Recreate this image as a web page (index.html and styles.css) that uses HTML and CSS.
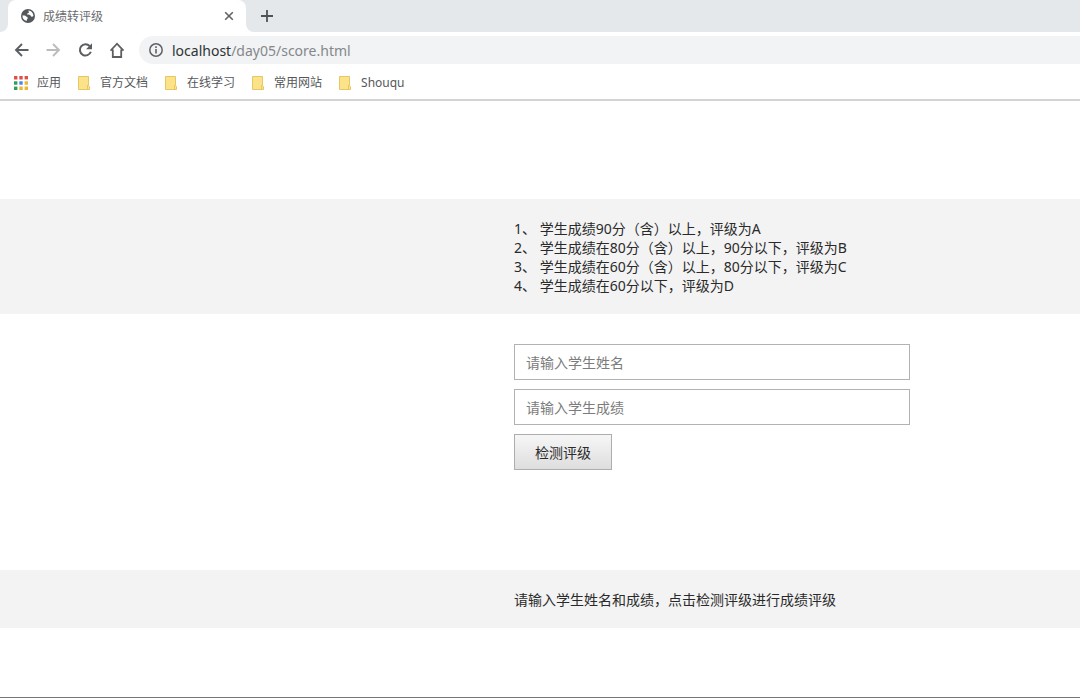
FILE: index.html
```html
<!DOCTYPE html>
<html lang="zh-CN">
<head>
<meta charset="utf-8">
<title>成绩转评级</title>
<link rel="stylesheet" href="styles.css">
</head>
<body>
<header class="browser">
  <div class="tab-strip">
    <div class="strip-edge"></div>
    <div class="tab">
      <svg class="tab-icon" width="14" height="14" viewBox="0 0 14 14" aria-hidden="true"><circle cx="7" cy="7" r="7" fill="#55585b"/><path d="M1.700 6.200C3 6.600 4.500 6.400 5 7.300c.5 1 1.800.7 1.800 1.700 0 .9-1.100 1-1.200 2.900C3.200 11.400 1.500 9.500 1.500 7.200zM7.400 1.600c-.2 1 .8 1.100.5 2-.3.900-1.700.5-1.800 1.500-.1.900 1.900.6 2.900.9.900.3.700 1.700 1.700 1.800.7.100 1.200-.3 1.700-.7 0-2.900-2.200-5.400-5-5.500z" fill="#fff"/></svg>
      <span class="tab-title">成绩转评级</span>
      <button class="icon-button" type="button" aria-label="关闭标签页"><svg width="10" height="10" viewBox="0 0 10 10"><path d="M1.200 1.200l7.600 7.600M8.800 1.200L1.200 8.800" stroke="#5f6368" stroke-width="1.600"/></svg></button>
    </div>
    <div class="strip-rest">
      <button class="icon-button" type="button" aria-label="新标签页"><svg width="12" height="12" viewBox="0 0 12 12"><path d="M6 0v12M0 6h12" stroke="#505356" stroke-width="1.800"/></svg></button>
    </div>
  </div>
  <div class="toolbar">
    <nav class="nav-buttons">
      <button class="icon-button" type="button" aria-label="后退"><svg width="16" height="16" viewBox="0 0 16 16" fill="none" stroke="#5c5f62" stroke-width="1.900"><path d="M14.500 8H2M8 2L2 8l6 6"/></svg></button>
      <button class="icon-button" type="button" aria-label="前进"><svg width="16" height="16" viewBox="0 0 16 16" fill="none" stroke="#babcbe" stroke-width="1.900"><path d="M.5 8H13M7 2l6 6-6 6"/></svg></button>
      <button class="icon-button" type="button" aria-label="刷新"><svg width="16" height="16" viewBox="0 0 16 16"><path d="M11.700 4.200A5.600 5.600 0 1 0 12.800 9.700" fill="none" stroke="#5c5f62" stroke-width="2"/><path d="M14 1.200v6H8z" fill="#5c5f62"/></svg></button>
      <button class="icon-button" type="button" aria-label="主页"><svg width="16" height="16" viewBox="0 0 16 16" fill="none" stroke="#5c5f62" stroke-width="1.800"><path d="M.5 8.700L7 1.700l6.500 7M2.800 7.500V15h8.400V7.500"/></svg></button>
    </nav>
    <div class="address">
      <svg width="14" height="14" viewBox="0 0 14 14" aria-hidden="true"><circle cx="7" cy="7" r="6.200" fill="none" stroke="#5f6368" stroke-width="1.500"/><path d="M7 6v4.500M7 3.300v1.600" stroke="#5f6368" stroke-width="1.600"/></svg>
      <span class="url"><span class="host">localhost</span>/day05/score.html</span>
    </div>
  </div>
  <nav class="bookmarks">
    <a class="bookmark" href="#"><svg width="14" height="14" viewBox="0 0 14 14" aria-hidden="true"><path d="M0 0h3.400v3.400H0zM5.300 0h3.400v3.400H5.300z" fill="#df5148"/><path d="M10.600 0H14v3.400h-3.400z" fill="#df5148"/><path d="M0 5.300h3.400v3.400H0z" fill="#2f9e5b"/><path d="M5.300 5.300h3.400v3.400H5.300z" fill="#4389ea"/><path d="M10.600 5.300H14v3.400h-3.400zM5.300 10.600h3.400V14H5.300zM10.600 10.600H14V14h-3.400z" fill="#e8b936"/><path d="M0 10.600h3.400V14H0z" fill="#2f9e5b"/></svg><span>应用</span></a>
    <a class="bookmark" href="#"><svg width="14" height="14" viewBox="0 0 14 14" aria-hidden="true"><path d="M1.500.5h10v9l1 1v3h-11z" fill="#fce38a" stroke="#e6c765"/><path d="M10.500 9v4.500" stroke="#e6c765"/></svg><span>官方文档</span></a>
    <a class="bookmark" href="#"><svg width="14" height="14" viewBox="0 0 14 14" aria-hidden="true"><path d="M1.500.5h10v9l1 1v3h-11z" fill="#fce38a" stroke="#e6c765"/><path d="M10.500 9v4.500" stroke="#e6c765"/></svg><span>在线学习</span></a>
    <a class="bookmark" href="#"><svg width="14" height="14" viewBox="0 0 14 14" aria-hidden="true"><path d="M1.500.5h10v9l1 1v3h-11z" fill="#fce38a" stroke="#e6c765"/><path d="M10.500 9v4.500" stroke="#e6c765"/></svg><span>常用网站</span></a>
    <a class="bookmark" href="#"><svg width="14" height="14" viewBox="0 0 14 14" aria-hidden="true"><path d="M1.500.5h10v9l1 1v3h-11z" fill="#fce38a" stroke="#e6c765"/><path d="M10.500 9v4.500" stroke="#e6c765"/></svg><span>Shouqu</span></a>
  </nav>
</header>
<main class="page">
  <section class="band">
    <div class="column">
      1、 学生成绩90分（含）以上，评级为A<br>
      2、 学生成绩在80分（含）以上，90分以下，评级为B<br>
      3、 学生成绩在60分（含）以上，80分以下，评级为C<br>
      4、 学生成绩在60分以下，评级为D
    </div>
  </section>
  <form class="score-form">
    <div class="column fields">
      <input class="field" type="text" placeholder="请输入学生姓名" aria-label="学生姓名">
      <input class="field" type="text" placeholder="请输入学生成绩" aria-label="学生成绩">
      <button class="check" type="button">检测评级</button>
    </div>
  </form>
  <section class="band">
    <div class="column">请输入学生姓名和成绩，点击检测评级进行成绩评级</div>
  </section>
</main>
</body>
</html>
```

FILE: styles.css
```css
* {
  box-sizing: border-box;
}

body {
  margin: 0;
  min-height: 100vh;
  display: flex;
  flex-direction: column;
  border-bottom: 1px solid #777;
  background: #fff;
  color: #2a2a2a;
  font: 14px/19px "Noto Sans", "Noto Sans CJK SC", sans-serif;
}

.browser {
  border-bottom: 2px solid #d2d3d4;
}

.icon-button {
  display: flex;
  padding: 0;
  border: 0;
  background: none;
}

/* The grey upper half shows through the tab's rounded top corners. */
.tab-strip {
  display: flex;
  height: 32px;
  background: linear-gradient(#e4e8eb, #e4e8eb) 0 0 / 100% 16px no-repeat;
}

.strip-edge {
  width: 8px;
  background: #e4e8eb;
  border-bottom-right-radius: 8px;
}

.tab {
  display: flex;
  align-items: center;
  width: 238px;
  padding: 0 12px 0 13px;
  background: #fff;
  border-radius: 8px 8px 0 0;
}

.tab-title {
  flex: 1;
  margin-left: 8px;
  color: #6a6c6f;
  font-size: 12px;
}

.strip-rest {
  flex: 1;
  display: flex;
  align-items: center;
  padding-left: 15px;
  background: #e4e8eb;
  border-bottom-left-radius: 8px;
}

.toolbar {
  display: flex;
  align-items: center;
  height: 36px;
  padding-left: 14px;
}

.nav-buttons {
  display: flex;
  gap: 16px;
}

.address {
  flex: 1;
  display: flex;
  align-items: center;
  gap: 9px;
  height: 28px;
  margin-left: 13px;
  padding-left: 10px;
  background: #f1f3f4;
  border-radius: 14px 0 0 14px;
}

.url {
  color: #85888b;
}

.host {
  color: #303234;
}

.bookmarks {
  display: flex;
  align-items: center;
  gap: 16px;
  height: 31px;
  padding: 0 0 2px 14px;
}

.bookmark {
  display: flex;
  align-items: center;
  gap: 9px;
  color: #55575a;
  font-size: 12px;
  text-decoration: none;
}

.page {
  padding-top: 98px;
}

.band {
  padding: 20px 0 19px;
  background: #f3f3f3;
}

.column {
  width: 100%;
  max-width: 910px;
  padding-left: 514px;
}

.score-form {
  padding: 30px 0 100px;
}

.fields {
  display: flex;
  flex-direction: column;
  gap: 9px;
}

.field {
  width: 100%;
  height: 36px;
  padding: 0 11px;
  border: 1px solid #b2b2b2;
  background: #fff;
  font: inherit;
}

.field::placeholder {
  color: #7c7c7c;
}

.check {
  align-self: flex-start;
  height: 36px;
  padding: 0 20px;
  border: 1px solid #adadad;
  background: linear-gradient(#f6f6f6, #dedede);
  color: #2a2a2a;
  font: inherit;
}
```
